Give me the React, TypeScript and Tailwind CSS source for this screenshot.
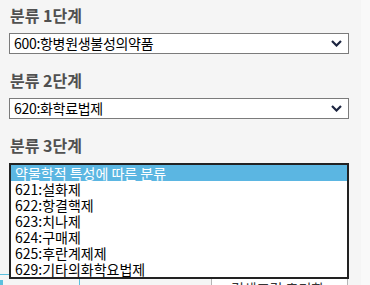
import React from 'react';

const font = { fontFamily: '"Noto Sans CJK KR", "Noto Sans", sans-serif' };

const ChevronDown = () => (
  <svg width="11" height="7" viewBox="0 0 11 7" className="shrink-0">
    <polyline points="1,1 5.5,5.5 10,1" fill="none" stroke="#1c2540" strokeWidth="2.2" />
  </svg>
);

function Label({ children }: { children: React.ReactNode }) {
  return (
    <div className="h-[20px] text-[16px] leading-[20px] font-bold text-[#505050] mb-[8px] pl-[1px]">{children}</div>
  );
}

function FakeSelect({ value }: { value: string }) {
  return (
    <div className="flex h-[21px] w-[340px] items-center justify-between border border-[#7b7b7b] bg-white pl-[4px] pr-[6px]">
      <span className="text-[14px] leading-[19px] text-black tracking-[-0.3px]">{value}</span>
      <ChevronDown />
    </div>
  );
}

const options = [
  '약물학적 특성에 따른 분류',
  '621:설화제',
  '622:항결핵제',
  '623:치나제',
  '624:구매제',
  '625:후란계제제',
  '629:기타의화학요법제',
];

export default function App() {
  return (
    <div className="flex h-[285px] w-[370px] overflow-hidden" style={font}>
      <div className="w-[361px] bg-[#f5f5f5]">
        <div className="px-[9px] pt-[5px]">
          <Label>분류 1단계</Label>
          <FakeSelect value="600:항병원생불성의약품" />
          <div className="h-[16px]" />
          <Label>분류 2단계</Label>
          <FakeSelect value="620:화학료법제" />
          <div className="h-[16px]" />
          <Label>분류 3단계</Label>
        </div>

        <div className="relative">
          {/* content under the open list */}
          <div className="pt-[111px] flex items-start">
            <div className="h-[12px] w-[80px] border-t border-r border-[#5bc0de]">
              <div className="mt-[5px] h-[6px] w-[3px] bg-[#5bc0de]" />
            </div>
            <div className="ml-[131px] mt-[-4px] h-[30px] w-[137px] border border-[#b5b5b5] bg-white pl-[8px] pt-[8px] text-[14px] leading-[18px] text-[#333]">
              + 검색조건 초기화
            </div>
          </div>

          {/* open listbox */}
          <div className="absolute left-[9px] top-0 z-10 w-[340px] border-2 border-[#222] bg-white">
            {options.map((o, i) => (
              <div
                key={o}
                className={
                  'h-[16px] pl-[4px] text-[14px] leading-[16px] ' +
                  (i === 0 ? 'bg-[#5bb6e2] text-white' : 'text-black')
                }
              >
                {o}
              </div>
            ))}
          </div>
        </div>
      </div>
      <div className="flex-1 bg-[#f9f9f9]" />
    </div>
  );
}
